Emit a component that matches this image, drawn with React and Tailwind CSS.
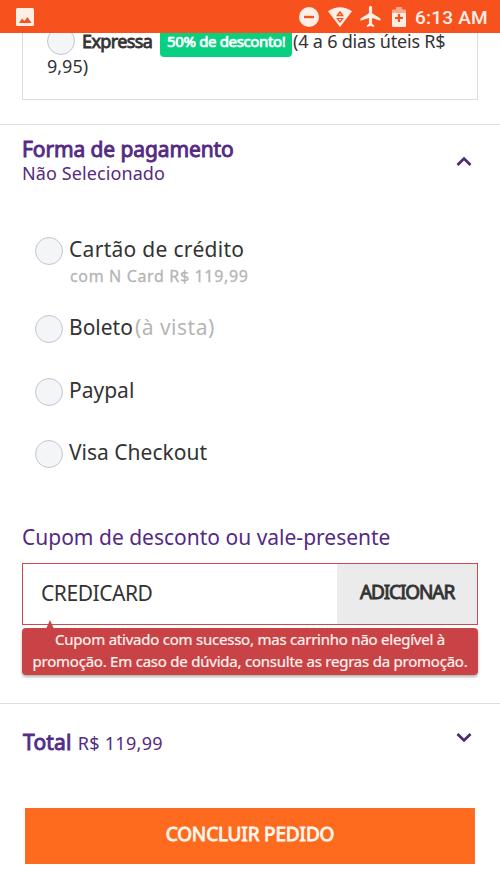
import React, { useState } from 'react'

const Radio = ({ className = '' }) => (
    <span className={`block w-7 h-7 shrink-0 rounded-full border border-[#c3c4d6] bg-[#f3f5f7] ${className}`} />
)

const Chevron = ({ up }) => (
    <svg width="16" height="11" viewBox="0 0 16 11" fill="none" stroke="#4b2a70" strokeWidth="2.8">
        <path d={up ? 'M1.5 9 L8 2.6 L14.5 9' : 'M1.5 2 L8 8.4 L14.5 2'} />
    </svg>
)

const StatusBar = () => (
    <header className="relative z-10 flex h-[33px] items-center bg-[#f7521e] pl-4 pr-[11px]">
        <svg width="18" height="18" viewBox="0 0 18 18">
            <rect width="18" height="18" rx="1.5" fill="#fdeee6" />
            <path d="M3 15 L6 10.5 L8.5 13 L11.5 9 L15.5 15 Z" fill="#f7521e" />
        </svg>
        <div className="ml-auto flex items-center">
            <svg width="20" height="20" viewBox="0 0 20 20">
                <circle cx="10" cy="10" r="10" fill="#fdeee6" />
                <rect x="5" y="8.8" width="10" height="2.4" fill="#f7521e" />
            </svg>
            <svg className="ml-[9px]" width="24" height="20" viewBox="0 0 24 20">
                <path d="M0 4.2 Q12 -3.6 24 4.2 L12 20 Z" fill="#fdeee6" />
                <path d="M8 9.3 L12 3.8 L16 9.3 Z M8 11 H16 L12 16 Z" fill="#f7521e" />
                <path d="M10.5 12 H13.5 L12 14 Z M11 8 L12 6.5 L13 8 Z" fill="#fdeee6" />
            </svg>
            <svg className="ml-2" width="21" height="21" viewBox="2 2 19 20" fill="#fdeee6">
                <path d="M21 16v-2l-8-5V3.5c0-.83-.67-1.5-1.5-1.5S10 2.67 10 3.5V9l-8 5v2l8-2.5V19l-2 1.5V22l3.5-1 3.5 1v-1.5L13 19v-5.5l8 2.5z" />
            </svg>
            <svg className="ml-[11px]" width="14" height="20" viewBox="0 0 14 20">
                <path d="M1 2.5 H4 V0 H10 V2.5 H13 Q14 2.5 14 3.5 V6 H0 V3.5 Q0 2.5 1 2.5 Z" fill="#fba98b" />
                <path d="M0 6 H14 V18.8 Q14 20 12.8 20 H1.2 Q0 20 0 18.8 Z" fill="#fdeee6" />
                <path d="M5.9 7 H8.1 V9.9 H11 V12.1 H8.1 V15 H5.9 V12.1 H3 V9.9 H5.9 Z" fill="#f7521e" />
            </svg>
            <span className="ml-[9px] w-[74px] whitespace-nowrap pt-0.5 font-[Roboto,sans-serif] text-[19px] font-medium leading-[31px] tracking-[0.2px] text-[#fdeee6]">6:13 AM</span>
        </div>
    </header>
)

const ShippingOption = () => (
    <section className="h-[92px] border-b border-[#dedede] px-[22px]">
        <div className="flex h-[67px] flex-col border border-t-0 border-[#dcdcdc] pl-6">
            <div className="-mt-1.5 flex h-7">
                <Radio />
                <p className="ml-[7px] w-[78px] text-[18px] leading-[28px] tracking-[-0.6px] [-webkit-text-stroke:0.8px]">Expressa</p>
                <span className="h-[30px] w-[132px] shrink-0 rounded bg-[#09cf80] pl-[7px] text-[15px] leading-[29px] tracking-[-0.35px] text-white [-webkit-text-stroke:0.7px]">50% de desconto!</span>
                <span className="ml-px text-[18px] leading-[28px] tracking-[-0.2px]">(4 a 6 dias úteis R$</span>
            </div>
            <p className="text-[18px] leading-[22px]">9,95)</p>
        </div>
    </section>
)

const PaymentOption = ({ label, note, detail, className }) => (
    <li className={`flex ${className}`}>
        <Radio />
        <div className="ml-1.5">
            <p className="flex text-[21px] leading-[25px]">
                <span className={detail ? 'tracking-[0.3px]' : ''}>{label}</span>
                {note && <span className="ml-0.5 tracking-[0.5px] text-[#b5b5b5]">{note}</span>}
            </p>
            {detail && <p className="ml-px text-[16px] leading-[28px] tracking-[0.65px] text-[#b5b5b5] [-webkit-text-stroke:0.3px]">{detail}</p>}
        </div>
    </li>
)

const Payment = () => (
    <section className="flex h-[579px] flex-col border-b border-[#dedede] px-[22px]">
        <div className="flex justify-between pt-3 text-[#552a84]">
            <div>
                <h2 className="text-[21px] leading-[25px] tracking-[-0.1px] [-webkit-text-stroke:0.9px]">Forma de pagamento</h2>
                <p className="text-[18px] leading-[22px] tracking-[0.1px]">Não Selecionado</p>
            </div>
            <div className="mr-1.5 pt-[19px]">
                <Chevron up />
            </div>
        </div>
        <ul className="mt-[53px] pl-[13px]">
            <PaymentOption className="h-[78px]" label="Cartão de crédito" detail="com N Card R$ 119,99" />
            <PaymentOption className="h-[63px]" label="Boleto" note="(à vista)" />
            <PaymentOption className="h-[62px]" label="Paypal" />
            <PaymentOption className="h-[28px]" label="Visa Checkout" />
        </ul>
        <Coupon />
    </section>
)

const Coupon = () => {
    const [code, setCode] = useState('CREDICARD')

    return (
        <div className="mt-[55px]">
            <h3 className="text-[21px] leading-[28px] text-[#552a84]">Cupom de desconto ou vale-presente</h3>
            <div className="mt-3 flex h-[62px] border border-[#cf4a4b]">
                <input
                    value={code}
                    onChange={(e) => setCode(e.target.value)}
                    className="w-[314px] pl-[18px] text-[21px] tracking-[-0.45px] outline-none"
                />
                <button type="button" className="flex-1 bg-[#ebebeb] pb-1 text-[19px] tracking-[-1.1px] [-webkit-text-stroke:0.9px]">ADICIONAR</button>
            </div>
            <div className="relative mt-[3px] h-[47px] rounded bg-[#c94346] text-center text-[15px] leading-[22px] tracking-[-0.23px] text-[#fff3f0] shadow-[0_2px_3px_rgba(0,0,0,0.3)] [-webkit-text-stroke:0.2px]">
                <svg className="absolute -top-2 left-6" width="8" height="9" viewBox="0 0 8 9">
                    <path d="M0 9 L4 0 L8 9 Z" fill="#c94346" />
                </svg>
                <p>Cupom ativado com sucesso, mas carrinho não elegível à</p>
                <p>promoção. Em caso de dúvida, consulte as regras da promoção.</p>
            </div>
        </div>
    )
}

const Summary = () => (
    <section className="px-[22px] pt-6">
        <div className="flex justify-between text-[#552a84]">
            <p className="flex items-baseline leading-[28px]">
                <span className="pl-px text-[21px] tracking-[0.2px] [-webkit-text-stroke:0.9px]">Total</span>
                <span className="ml-1.5 text-[18px] tracking-[0.3px]">R$ 119,99</span>
            </p>
            <div className="mr-1.5 pt-1">
                <Chevron />
            </div>
        </div>
        <button type="button" className="mx-[3px] mt-[51px] block h-14 w-[450px] bg-[#ff6b1e] pb-1 text-[19px] tracking-[-0.15px] text-[#fff6ee] [-webkit-text-stroke:0.9px]">CONCLUIR PEDIDO</button>
    </section>
)

const App = () => (
    <div className="h-[889px] w-[500px] overflow-hidden bg-white font-['Noto_Sans',sans-serif] text-[#333] whitespace-nowrap">
        <StatusBar />
        <ShippingOption />
        <Payment />
        <Summary />
    </div>
)

export default App
